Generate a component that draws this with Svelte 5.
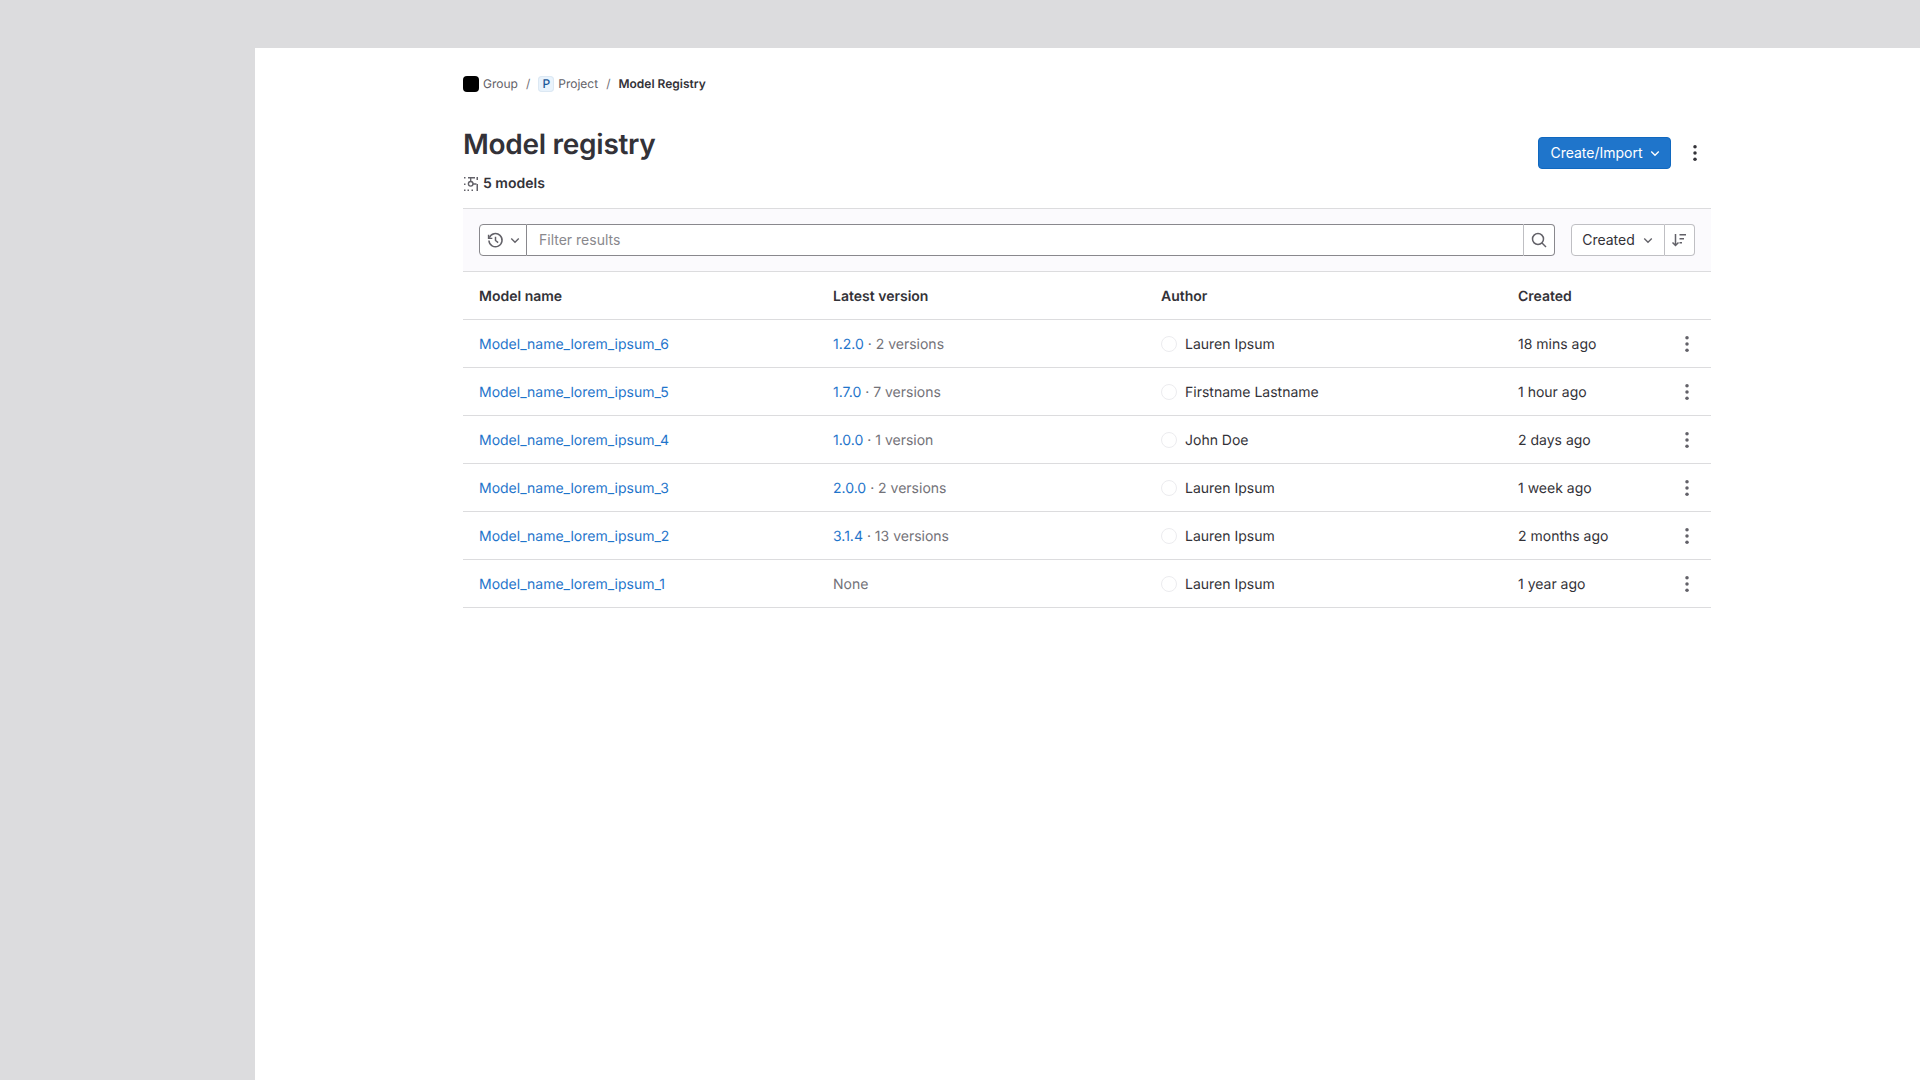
<script>
  const rows = [
    { name: 'Model_name_lorem_ipsum_6', version: '1.2.0', count: '2 versions', author: 'Lauren Ipsum', created: '18 mins ago' },
    { name: 'Model_name_lorem_ipsum_5', version: '1.7.0', count: '7 versions', author: 'Firstname Lastname', created: '1 hour ago' },
    { name: 'Model_name_lorem_ipsum_4', version: '1.0.0', count: '1 version', author: 'John Doe', created: '2 days ago' },
    { name: 'Model_name_lorem_ipsum_3', version: '2.0.0', count: '2 versions', author: 'Lauren Ipsum', created: '1 week ago' },
    { name: 'Model_name_lorem_ipsum_2', version: '3.1.4', count: '13 versions', author: 'Lauren Ipsum', created: '2 months ago' },
    { name: 'Model_name_lorem_ipsum_1', version: null, count: null, author: 'Lauren Ipsum', created: '1 year ago' }
  ];
</script>

<div class="shell">
  <main>
    <nav class="crumbs">
      <span class="group-logo"></span>
      <span class="crumb">Group</span>
      <span class="sep">/</span>
      <span class="project-logo">P</span>
      <span class="crumb">Project</span>
      <span class="sep">/</span>
      <strong class="crumb">Model Registry</strong>
    </nav>

    <header class="head">
      <div>
        <h1>Model registry</h1>
        <div class="count">
          <svg width="16" height="16" viewBox="0 0 16 16" fill="#626168">
            <rect x="1" y="1" width="1.500" height="1.500" />
            <rect x="1" y="7.500" width="1.500" height="1.500" />
            <rect x="1" y="13.500" width="1.500" height="1.500" />
            <rect x="4.500" y="13.500" width="1.500" height="1.500" />
            <rect x="8.500" y="13.500" width="1.500" height="1.500" />
            <path d="M5 1h7v1.500H5zM13.500 1H15v3h-1.500zM13.500 8H15v7h-1.500z" />
            <path d="M7.700 2v3.300M10 8h3.500" stroke="#626168" stroke-width="1.300" fill="none" />
            <circle cx="7.700" cy="7.800" r="2.300" fill="none" stroke="#626168" stroke-width="1.400" />
          </svg>
          <span>5 models</span>
        </div>
      </div>
      <div class="actions">
        <button class="primary" type="button">
          Create/Import
          <svg width="12" height="12" viewBox="0 0 16 16" fill="none" stroke="#fff" stroke-width="1.800"><path d="M3 6l5 5 5-5" /></svg>
        </button>
        <button class="kebab" type="button" aria-label="Actions">
          <svg width="16" height="16" viewBox="0 0 16 16" fill="#333238"><circle cx="8" cy="1.750" r="1.750" /><circle cx="8" cy="8" r="1.750" /><circle cx="8" cy="14.250" r="1.750" /></svg>
        </button>
      </div>
    </header>

    <section class="toolbar">
      <div class="filter">
        <button class="history" type="button" aria-label="Recent searches">
          <svg width="17" height="17" viewBox="0 0 16 16" fill="none" stroke="#626168" stroke-width="1.400"><path d="M2.200 5.500A6.200 6.200 0 1 1 1.800 8" /><path d="M1.500 2.500v3.500H5" /><path d="M8 4.500V8l2.500 2" /></svg>
          <svg width="12" height="12" viewBox="0 0 16 16" fill="none" stroke="#626168" stroke-width="1.800"><path d="M3 6l5 5 5-5" /></svg>
        </button>
        <input type="text" placeholder="Filter results" />
        <button class="search" type="button" aria-label="Search">
          <svg width="16" height="16" viewBox="0 0 16 16" fill="none" stroke="#626168" stroke-width="1.500"><circle cx="7" cy="7" r="5.500" /><path d="M11 11l4 4" /></svg>
        </button>
      </div>
      <div class="sort">
        <button class="sort-field" type="button">
          Created
          <svg width="12" height="12" viewBox="0 0 16 16" fill="none" stroke="#626168" stroke-width="1.800"><path d="M3 6l5 5 5-5" /></svg>
        </button>
        <button class="sort-dir" type="button" aria-label="Sort direction">
          <svg width="16" height="16" viewBox="0 0 16 16" fill="none" stroke="#626168" stroke-width="1.500"><path d="M4.500 2v11.500M1.500 10.500l3 3 3-3" /><path d="M8.500 2.750h6.500M8.500 6.750h4.500M8.500 10.750h2.500" /></svg>
        </button>
      </div>
    </section>

    <table>
      <colgroup>
        <col class="c1" /><col class="c2" /><col class="c3" /><col class="c4" /><col />
      </colgroup>
      <thead>
        <tr>
          <th>Model name</th>
          <th>Latest version</th>
          <th>Author</th>
          <th>Created</th>
          <th></th>
        </tr>
      </thead>
      <tbody>
        {#each rows as row}
          <tr>
            <td><a href="#model">{row.name}</a></td>
            <td class="muted">
              {#if row.version}
                <a href="#version">{row.version}</a> · {row.count}
              {:else}
                None
              {/if}
            </td>
            <td>
              <span class="author"><span class="avatar"></span>{row.author}</span>
            </td>
            <td>{row.created}</td>
            <td class="more">
              <button class="kebab" type="button" aria-label="More">
                <svg width="16" height="16" viewBox="0 0 16 16" fill="#626168"><circle cx="8" cy="1.750" r="1.750" /><circle cx="8" cy="8" r="1.750" /><circle cx="8" cy="14.250" r="1.750" /></svg>
              </button>
            </td>
          </tr>
        {/each}
      </tbody>
    </table>
  </main>
</div>

<style>
  :global(body) {
    background: #dcdcde;
  }

  .shell {
    padding: 48px 0 0 255px;
    height: 100vh;
    box-sizing: border-box;
    font-family: Inter, "Liberation Sans", sans-serif;
    font-size: 14px;
    color: #333238;
    text-rendering: geometricPrecision;
  }

  main {
    background: #fff;
    height: 100%;
    box-sizing: border-box;
    padding: 28px 209px 0 208px;
  }

  button {
    font: inherit;
    color: inherit;
    background: none;
    border: 0;
    padding: 0;
    display: flex;
    align-items: center;
    justify-content: center;
  }

  .crumbs {
    display: flex;
    align-items: center;
    height: 16px;
    font-size: 12px;
    color: #626168;
  }

  .crumb {
    padding-bottom: 1px;
  }

  .crumbs strong {
    font-weight: 600;
    color: #333238;
  }

  .sep {
    margin: 0 8px;
    padding-bottom: 1px;
    color: #737278;
  }

  .group-logo {
    width: 16px;
    height: 16px;
    border-radius: 4px;
    background: #000;
    margin-right: 4px;
  }

  .project-logo {
    width: 16px;
    height: 16px;
    border-radius: 4px;
    background: #e9f3fc;
    box-shadow: inset 0 0 0 1px #dce8f3;
    color: #1f5a9a;
    font-size: 12px;
    font-weight: 500;
    line-height: 16px;
    text-align: center;
    margin-right: 4px;
  }

  .head {
    display: flex;
    justify-content: space-between;
    align-items: flex-start;
    padding: 34px 0 14px;
  }

  h1 {
    margin: 0;
    font-size: 28px;
    line-height: 36px;
    font-weight: 600;
    letter-spacing: -0.28px;
  }

  .count {
    display: flex;
    align-items: center;
    gap: 4px;
    margin-top: 12px;
    font-weight: 600;
    line-height: 20px;
  }

  .actions {
    display: flex;
    align-items: center;
    gap: 8px;
    margin-top: 11px;
  }

  .primary {
    height: 32px;
    width: 133px;
    padding: 0 1px 1px 3px;
    gap: 6px;
    color: #fff;
    background: #1f75cb;
    border: 1px solid #1068bf;
    border-radius: 4px;
    box-sizing: border-box;
  }

  .kebab {
    width: 32px;
    height: 32px;
  }

  .toolbar {
    display: flex;
    justify-content: space-between;
    padding: 15px 16px;
    background: #fbfafd;
    border-top: 1px solid #dcdcde;
    border-bottom: 1px solid #dcdcde;
  }

  .filter {
    display: flex;
    flex: 1;
    height: 32px;
    margin-right: 16px;
  }

  .history {
    width: 48px;
    gap: 5px;
    padding-left: 1px;
    background: #fff;
    border: 1px solid #89888d;
    border-radius: 4px 0 0 4px;
    box-sizing: border-box;
  }

  input {
    flex: 1;
    min-width: 0;
    height: 32px;
    box-sizing: border-box;
    padding: 0 12px 1px;
    font: inherit;
    color: #333238;
    background: #fff;
    border: 1px solid #89888d;
    border-width: 1px 0;
    outline: 0;
  }

  input::placeholder {
    color: #89888d;
    opacity: 1;
  }

  .search {
    width: 32px;
    background: #fff;
    border: 1px solid #89888d;
    border-left-color: #bfbfc3;
    border-radius: 0 4px 4px 0;
    box-sizing: border-box;
  }

  .sort {
    display: flex;
    height: 32px;
  }

  .sort button {
    background: #fff;
    border: 1px solid #bfbfc3;
    box-sizing: border-box;
  }

  .sort-field {
    width: 94px;
    gap: 7px;
    padding-bottom: 1px;
    border-radius: 4px 0 0 4px;
  }

  .sort-dir {
    width: 30px;
    padding-right: 2px;
    border-left: 0 !important;
    border-radius: 0 4px 4px 0;
  }

  table {
    width: 100%;
    border-collapse: collapse;
    table-layout: fixed;
  }

  .c1 {
    width: 354px;
  }

  .c2 {
    width: 328px;
  }

  .c3 {
    width: 357px;
  }

  .c4 {
    width: 150px;
  }

  th {
    box-sizing: border-box;
    height: 47px;
    padding: 2px 16px 0;
    text-align: left;
    font-weight: 600;
    border-bottom: 1px solid #dcdcde;
  }

  td {
    box-sizing: border-box;
    height: 48px;
    padding: 2px 16px 0;
    border-bottom: 1px solid #dcdcde;
    white-space: nowrap;
  }

  td a {
    color: #1f75cb;
    text-decoration: none;
  }

  .muted {
    color: #737278;
  }

  .author {
    display: flex;
    align-items: center;
    gap: 8px;
  }

  .avatar {
    width: 16px;
    height: 16px;
    margin-top: -1px;
    box-sizing: border-box;
    border-radius: 50%;
    border: 1px solid #ececef;
    background: #fff;
  }

  .more {
    padding: 2px 8px 0 0;
  }

  .more .kebab {
    margin-left: auto;
  }
</style>
